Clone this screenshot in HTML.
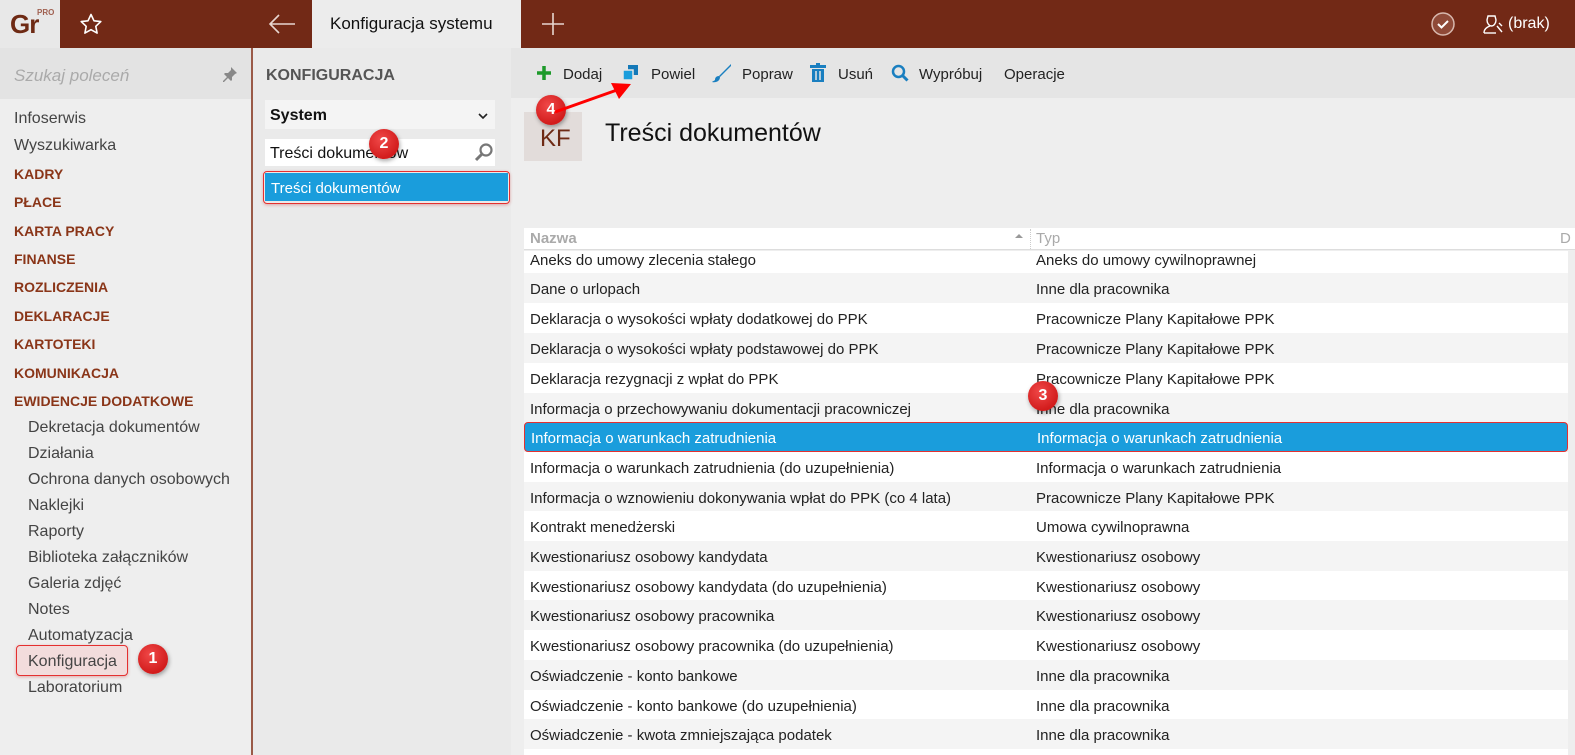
<!DOCTYPE html>
<html><head><meta charset="utf-8">
<style>
*{margin:0;padding:0;box-sizing:border-box}
body{width:1575px;height:755px;overflow:hidden;position:relative;background:#eeeeee;font-family:"Liberation Sans","DejaVu Sans",sans-serif;color:#222}
.a{position:absolute}
.top{left:0;top:0;width:1575px;height:48px;background:#722916}
.nav{font-size:16px;color:#444;white-space:nowrap;margin-top:2px}
.cat{font-size:14px;font-weight:bold;color:#8a3518;white-space:nowrap;margin-top:2px}
.row{left:524px;width:1044px;height:30px;font-size:15px;line-height:30px;color:#222}
.row span{position:absolute;top:2px;white-space:nowrap}
.row .c1{left:6px}.row .c2{left:512px}
.g{background:#f4f4f4}.w{background:#fff}
.badge{width:30px;height:30px;border-radius:50%;background:radial-gradient(circle at 40% 35%,#f04848,#d21c1c 70%);color:#fff;font-weight:bold;font-size:16px;text-align:center;line-height:30px;box-shadow:1px 2px 4px rgba(0,0,0,.35)}
.tb{font-size:15px;color:#222;top:66px;white-space:nowrap}
</style></head><body>
<div class="a top"></div>
<div class="a" style="left:0;top:0;width:60px;height:48px;background:#e8e8e8"></div>
<div class="a" style="left:10px;top:9px;font-size:26px;font-weight:bold;color:#6e2a14;letter-spacing:-1px">Gr</div>
<div class="a" style="left:37px;top:8px;font-size:8px;color:#a06050;font-weight:bold">PRO</div>
<svg class="a" style="left:79px;top:13px" width="24" height="22" viewBox="0 0 24 22"><path d="M12 1.5l3 6.3 6.8.8-5 4.7 1.3 6.8L12 16.7 5.9 20.1l1.3-6.8-5-4.7 6.8-.8z" fill="none" stroke="#fff" stroke-width="1.6" stroke-linejoin="round"/></svg>
<svg class="a" style="left:268px;top:13px" width="28" height="22" viewBox="0 0 28 22"><path d="M27 11H2M11 2L2 11l9 9" fill="none" stroke="#e8d6d0" stroke-width="1.6"/></svg>
<div class="a" style="left:312px;top:0;width:209px;height:48px;background:#ececec"></div>
<div class="a" style="left:330px;top:14px;font-size:17px;color:#111">Konfiguracja systemu</div>
<svg class="a" style="left:542px;top:13px" width="22" height="22" viewBox="0 0 22 22"><path d="M11 0v22M0 11h22" stroke="#e8d6d0" stroke-width="1.6"/></svg>
<svg class="a" style="left:1430px;top:11px" width="26" height="26" viewBox="0 0 26 26"><circle cx="13" cy="13" r="11" fill="#8f4a38" stroke="#d8b8ae" stroke-width="1.5"/><path d="M8 13l3.5 3.5L18 10" fill="none" stroke="#fff" stroke-width="2"/></svg>
<svg class="a" style="left:1482px;top:14px" width="22" height="20" viewBox="0 0 22 20"><path d="M6 2h7l1 4c0 3-2 6-4.5 6S5 9 5 6zM2 19c0-4 3-6 6-7M15 12l5 6M17 9l3 3" fill="none" stroke="#fff" stroke-width="1.4"/><path d="M2 19h12" stroke="#fff" stroke-width="1.4"/></svg>
<div class="a" style="left:1508px;top:15px;font-size:16px;color:#fff">(brak)</div>

<div class="a" style="left:0;top:48px;width:251px;height:707px;background:#eeeeee"></div>
<div class="a" style="left:0;top:48px;width:251px;height:51px;background:#e3e3e3"></div>
<div class="a" style="left:14px;top:66px;font-size:17px;font-style:italic;color:#aaa">Szukaj poleceń</div>
<svg class="a" style="left:222px;top:66px" width="16" height="16" viewBox="0 0 16 16"><path d="M9 1l6 6-2 1-3 3 0 3-1 1-3-3-4 4-1 0 0-1 4-4-3-3 1-1 3 0 3-3z" fill="#888"/></svg>
<div class="a" style="left:251px;top:48px;width:2px;height:707px;background:#9a5a48"></div>
<div class="a" style="left:16px;top:645px;width:112px;height:31px;background:#f2dcdc;border:1.5px solid #e43030;border-radius:4px;box-shadow:0 1px 3px rgba(200,0,0,.3)"></div>
<div class="a nav" style="left:14px;top:108px">Infoserwis</div>
<div class="a nav" style="left:14px;top:135px">Wyszukiwarka</div>
<div class="a cat" style="left:14px;top:164px">KADRY</div>
<div class="a cat" style="left:14px;top:192px">PŁACE</div>
<div class="a cat" style="left:14px;top:221px">KARTA PRACY</div>
<div class="a cat" style="left:14px;top:249px">FINANSE</div>
<div class="a cat" style="left:14px;top:277px">ROZLICZENIA</div>
<div class="a cat" style="left:14px;top:306px">DEKLARACJE</div>
<div class="a cat" style="left:14px;top:334px">KARTOTEKI</div>
<div class="a cat" style="left:14px;top:363px">KOMUNIKACJA</div>
<div class="a cat" style="left:14px;top:391px">EWIDENCJE DODATKOWE</div>
<div class="a nav" style="left:28px;top:417px">Dekretacja dokumentów</div>
<div class="a nav" style="left:28px;top:443px">Działania</div>
<div class="a nav" style="left:28px;top:469px">Ochrona danych osobowych</div>
<div class="a nav" style="left:28px;top:495px">Naklejki</div>
<div class="a nav" style="left:28px;top:521px">Raporty</div>
<div class="a nav" style="left:28px;top:547px">Biblioteka załączników</div>
<div class="a nav" style="left:28px;top:573px">Galeria zdjęć</div>
<div class="a nav" style="left:28px;top:599px">Notes</div>
<div class="a nav" style="left:28px;top:625px">Automatyzacja</div>
<div class="a nav" style="left:28px;top:651px">Konfiguracja</div>
<div class="a nav" style="left:28px;top:677px">Laboratorium</div>
<div class="a badge" style="left:138px;top:644px">1</div>

<div class="a" style="left:253px;top:48px;width:258px;height:707px;background:#eaeaea"></div>
<div class="a" style="left:266px;top:67px;font-size:16px;font-weight:bold;color:#555">KONFIGURACJA</div>
<div class="a" style="left:265px;top:100px;width:230px;height:29px;background:#f4f4f4"></div>
<div class="a" style="left:270px;top:107px;font-size:16px;font-weight:bold;color:#111">System</div>
<svg class="a" style="left:478px;top:112px" width="10" height="8" viewBox="0 0 10 8"><path d="M1 2l4 4 4-4" fill="none" stroke="#222" stroke-width="1.6"/></svg>
<div class="a" style="left:265px;top:139px;width:230px;height:27px;background:#fff"></div>
<div class="a" style="left:270px;top:145px;font-size:16px;color:#111">Treści dokumentów</div>
<svg class="a" style="left:474px;top:142px" width="20" height="20" viewBox="0 0 20 20"><circle cx="12" cy="8" r="5.5" fill="none" stroke="#777" stroke-width="2.2"/><path d="M8 12l-6 6" stroke="#777" stroke-width="3"/></svg>
<div class="a" style="left:263px;top:171px;width:247px;height:33px;border:1.5px solid #e43030;border-radius:4px;box-shadow:0 1px 3px rgba(200,0,0,.3)"></div>
<div class="a" style="left:265px;top:173px;width:243px;height:28px;background:#1a9ddc"></div>
<div class="a" style="left:271px;top:180px;font-size:15px;color:#fff">Treści dokumentów</div>
<div class="a badge" style="left:369px;top:129px">2</div>

<div class="a" style="left:511px;top:48px;width:1064px;height:50px;background:#e5e5e5"></div>
<svg class="a" style="left:536px;top:65px" width="16" height="16" viewBox="0 0 16 16"><path d="M8 1v14M1 8h14" stroke="#1d9a2a" stroke-width="3.5"/></svg>
<div class="a tb" style="left:563px">Dodaj</div>
<svg class="a" style="left:622px;top:64px" width="17" height="17" viewBox="0 0 17 17"><rect x="6" y="1" width="10" height="10" fill="#1479b8"/><rect x="1" y="6" width="10" height="10" fill="#1a9ddc" stroke="#e5e5e5" stroke-width="1.5"/></svg>
<div class="a tb" style="left:651px">Powiel</div>
<svg class="a" style="left:712px;top:63px" width="20" height="20" viewBox="0 0 20 20"><path d="M19 1L8 12l-1 1 1 1 1-1L19 3z" fill="#1a7fc0"/><path d="M7 13c-3 0-4 2-4 4-1 1-2 1-3 2 4 1 8-1 8-5z" fill="#1a7fc0"/></svg>
<div class="a tb" style="left:742px">Popraw</div>
<svg class="a" style="left:810px;top:63px" width="16" height="19" viewBox="0 0 16 19"><rect x="0" y="2" width="16" height="3" fill="#1a7fc0"/><rect x="6" y="0" width="4" height="3" fill="#1a7fc0"/><path d="M2 6h12v13H2z" fill="#1a7fc0"/><path d="M6 8v9M10 8v9" stroke="#e5e5e5" stroke-width="1.5"/></svg>
<div class="a tb" style="left:838px">Usuń</div>
<svg class="a" style="left:891px;top:64px" width="18" height="18" viewBox="0 0 18 18"><circle cx="7.5" cy="7.5" r="5.5" fill="none" stroke="#1a7fc0" stroke-width="2.5"/><path d="M11.5 11.5l5 5" stroke="#1a7fc0" stroke-width="3"/></svg>
<div class="a tb" style="left:919px">Wypróbuj</div>
<div class="a tb" style="left:1004px">Operacje</div>

<div class="a" style="left:524px;top:112px;width:58px;height:49px;background:#e2dcda"></div>
<div class="a" style="left:540px;top:125px;font-size:24px;color:#6e2a14">KF</div>
<div class="a" style="left:605px;top:119px;font-size:25px;color:#111">Treści dokumentów</div>
<div class="a badge" style="left:536px;top:95px">4</div>
<svg class="a" style="left:545px;top:70px" width="100" height="50" viewBox="0 0 100 50"><path d="M10 42L72 20" stroke="#f00" stroke-width="3"/><path d="M86 14L66 13l8 16z" fill="#f00"/></svg>

<div class="a" style="left:524px;top:228px;width:1051px;height:22px;background:#fff;border-bottom:1px solid #ddd"></div>
<div class="a" style="left:530px;top:230px;font-size:15px;font-weight:bold;color:#aaa">Nazwa</div>
<svg class="a" style="left:1014px;top:232px" width="10" height="8" viewBox="0 0 10 8"><path d="M1 6l4-4 4 4z" fill="#999"/></svg>
<div class="a" style="left:1030px;top:229px;width:1px;height:20px;border-left:1px dotted #ccc"></div>
<div class="a" style="left:1036px;top:230px;font-size:15px;color:#aaa">Typ</div>
<div class="a" style="left:1560px;top:230px;font-size:15px;color:#aaa">D</div>

<div class="a row w" style="top:251px;height:22px;line-height:16px"><span class="c1">Aneks do umowy zlecenia stałego</span><span class="c2">Aneks do umowy cywilnoprawnej</span></div>
<div class="a row g" style="top:273px"><span class="c1">Dane o urlopach</span><span class="c2">Inne dla pracownika</span></div>
<div class="a row w" style="top:303px"><span class="c1">Deklaracja o wysokości wpłaty dodatkowej do PPK</span><span class="c2">Pracownicze Plany Kapitałowe PPK</span></div>
<div class="a row g" style="top:333px"><span class="c1">Deklaracja o wysokości wpłaty podstawowej do PPK</span><span class="c2">Pracownicze Plany Kapitałowe PPK</span></div>
<div class="a row w" style="top:363px"><span class="c1">Deklaracja rezygnacji z wpłat do PPK</span><span class="c2">Pracownicze Plany Kapitałowe PPK</span></div>
<div class="a row g" style="top:393px"><span class="c1">Informacja o przechowywaniu dokumentacji pracowniczej</span><span class="c2">Inne dla pracownika</span></div>
<div class="a row" style="top:422px;background:#1a9ddc;color:#fff;border:1.5px solid #e43030;border-radius:4px;line-height:27px"><span class="c1">Informacja o warunkach zatrudnienia</span><span class="c2">Informacja o warunkach zatrudnienia</span></div>
<div class="a row w" style="top:452px"><span class="c1">Informacja o warunkach zatrudnienia (do uzupełnienia)</span><span class="c2">Informacja o warunkach zatrudnienia</span></div>
<div class="a row g" style="top:482px"><span class="c1">Informacja o wznowieniu dokonywania wpłat do PPK (co 4 lata)</span><span class="c2">Pracownicze Plany Kapitałowe PPK</span></div>
<div class="a row w" style="top:511px"><span class="c1">Kontrakt menedżerski</span><span class="c2">Umowa cywilnoprawna</span></div>
<div class="a row g" style="top:541px"><span class="c1">Kwestionariusz osobowy kandydata</span><span class="c2">Kwestionariusz osobowy</span></div>
<div class="a row w" style="top:571px"><span class="c1">Kwestionariusz osobowy kandydata (do uzupełnienia)</span><span class="c2">Kwestionariusz osobowy</span></div>
<div class="a row g" style="top:600px"><span class="c1">Kwestionariusz osobowy pracownika</span><span class="c2">Kwestionariusz osobowy</span></div>
<div class="a row w" style="top:630px"><span class="c1">Kwestionariusz osobowy pracownika (do uzupełnienia)</span><span class="c2">Kwestionariusz osobowy</span></div>
<div class="a row g" style="top:660px"><span class="c1">Oświadczenie - konto bankowe</span><span class="c2">Inne dla pracownika</span></div>
<div class="a row w" style="top:690px"><span class="c1">Oświadczenie - konto bankowe (do uzupełnienia)</span><span class="c2">Inne dla pracownika</span></div>
<div class="a row g" style="top:719px"><span class="c1">Oświadczenie - kwota zmniejszająca podatek</span><span class="c2">Inne dla pracownika</span></div>
<div class="a" style="left:524px;top:749px;width:1044px;height:6px;background:#fff"></div>
<div class="a badge" style="left:1028px;top:381px">3</div>
</body></html>
